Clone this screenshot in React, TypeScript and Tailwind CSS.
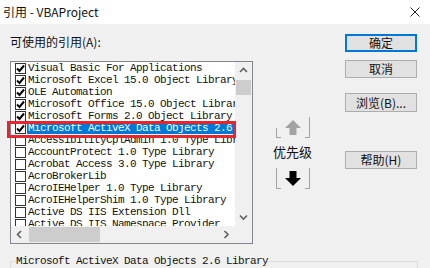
const rows = [
  { text: "Visual Basic For Applications", checked: true },
  { text: "Microsoft Excel 15.0 Object Library", checked: true },
  { text: "OLE Automation", checked: true },
  { text: "Microsoft Office 15.0 Object Library", checked: true },
  { text: "Microsoft Forms 2.0 Object Library", checked: true },
  { text: "Microsoft ActiveX Data Objects 2.6 Library", checked: true, selected: true },
  { text: "AccessibilityCplAdmin 1.0 Type Library" },
  { text: "AccountProtect 1.0 Type Library" },
  { text: "Acrobat Access 3.0 Type Library" },
  { text: "AcroBrokerLib" },
  { text: "AcroIEHelper 1.0 Type Library" },
  { text: "AcroIEHelperShim 1.0 Type Library" },
  { text: "Active DS IIS Extension Dll" },
  { text: "Active DS IIS Namespace Provider" },
];

function Chevron({ dir }: { dir: "up" | "down" | "left" | "right" }) {
  const pts = {
    up: "1,6 4.5,2.5 8,6",
    down: "1,2.5 4.5,6 8,2.5",
    left: "6,1 2.5,4.5 6,8",
    right: "2.5,1 6,4.5 2.5,8",
  }[dir];
  return (
    <svg width="9" height="9" viewBox="0 0 9 9">
      <polyline points={pts} fill="none" stroke="#606060" strokeWidth="1.6" />
    </svg>
  );
}

function Checkbox({ checked }: { checked?: boolean }) {
  return (
    <div className="ml-[4px] flex h-[11px] w-[11px] shrink-0 items-center justify-center border border-[#333] bg-white">
      {checked ? (
        <svg width="9" height="9" viewBox="0 0 9 9">
          <polyline points="1,4.5 3.5,7 8,1.5" fill="none" stroke="#000" strokeWidth="2" />
        </svg>
      ) : null}
    </div>
  );
}

function MoveButton({ down }: { down?: boolean }) {
  const color = down ? "#000" : "#a3a3a3";
  return (
    <svg width="34" height="21" viewBox="0 0 34 21">
      <g stroke="#a0a0a0" strokeWidth="1" fill="none">
        <polyline points={down ? "0.5,0 0.5,20.5 5,20.5" : "0.5,11 0.5,20.5 5,20.5"} />
        <polyline points="33.5,0 33.5,20.5 29,20.5" />
      </g>
      {down ? (
        <polygon points="13.5,3 20.5,3 20.5,10 25,10 17,18 9,10 13.5,10" fill={color} />
      ) : (
        <polygon points="17,3 25,11 20.5,11 20.5,18 13.5,18 13.5,11 9,11" fill={color} />
      )}
    </svg>
  );
}

function WinButton({ label, h = "h-[18px]", def, className = "" }: { label: string; h?: string; def?: boolean; className?: string }) {
  return (
    <div
      className={`${h} ${className} flex w-[72px] items-center justify-center bg-[#e1e1e1] text-[12px] leading-none text-[#111] ${
        def ? "border-2 border-[#0078d7]" : "border border-[#adadad]"
      }`}
    >
      {label}
    </div>
  );
}

export default function App() {
  return (
    <div className="relative h-[268px] w-[430px] overflow-hidden bg-[#f0f0f0] font-['Noto_Sans_CJK_SC',sans-serif] text-[#111]">
      <div className="flex h-[24px] items-center justify-between bg-white pl-[3px] pr-[10px] text-[12px]">
        <span>引用 - VBAProject</span>
        <svg width="10" height="10" viewBox="0 0 10 10">
          <path d="M0.5 0.5 L9.5 9.5 M9.5 0.5 L0.5 9.5" stroke="#222" strokeWidth="1" />
        </svg>
      </div>

      <div className="flex">
        <div className="pl-[10px] pt-[10px]">
          <p className="h-[16px] text-[12px] leading-[16px]">可使用的引用(A):</p>
          <div className="mt-[11px] grid h-[183px] w-[243px] grid-cols-[224px_17px] grid-rows-[164px_17px] border border-[#828790] bg-white">
            <div className="overflow-hidden font-['Liberation_Mono',monospace] text-[11px] leading-[12px] tracking-[-0.6px]">
              {rows.map((r) => (
                <div key={r.text} className="flex h-[12px] items-center">
                  <Checkbox checked={r.checked} />
                  <span
                    className={`ml-[1px] whitespace-nowrap pl-[1px] ${
                      r.selected ? "bg-[#0078d7] text-white" : "text-[#111]"
                    }`}
                  >
                    {r.text}
                  </span>
                </div>
              ))}
            </div>
            <div className="flex flex-col items-center bg-[#f0f0f0]">
              <div className="flex h-[17px] items-center justify-center">
                <Chevron dir="up" />
              </div>
              <div className="mt-[1px] h-[15px] w-[15px] bg-[#cdcdcd]" />
              <div className="flex-1" />
              <div className="flex h-[17px] items-center justify-center">
                <Chevron dir="down" />
              </div>
            </div>
            <div className="flex items-center bg-[#f0f0f0]">
              <div className="flex w-[17px] items-center justify-center">
                <Chevron dir="left" />
              </div>
              <div className="ml-[1px] h-[15px] w-[71px] bg-[#cdcdcd]" />
              <div className="flex-1" />
              <div className="flex w-[17px] items-center justify-center">
                <Chevron dir="right" />
              </div>
            </div>
            <div className="bg-[#f0f0f0]" />
          </div>
        </div>

        <div className="flex w-[92px] flex-col items-start pl-[20px] pt-[93px]">
          <div className="flex flex-col items-center">
            <MoveButton />
            <p className="mt-[6px] h-[16px] text-[13px] leading-[16px]">优先级</p>
            <div className="mt-[8px]">
              <MoveButton down />
            </div>
          </div>
        </div>

        <div className="flex flex-col pt-[10px]">
          <WinButton label="确定" def />
          <WinButton label="取消" className="mt-[8px]" />
          <WinButton label="浏览(B)..." h="h-[19px]" className="mt-[15px]" />
          <WinButton label="帮助(H)" className="mt-[39px]" />
        </div>
      </div>

      <fieldset className="ml-[10px] mt-[11px] h-[40px] w-[408px] border border-[#dcdcdc]">
        <legend className="ml-[5px] font-['Liberation_Mono',monospace] text-[11px] leading-[12px] tracking-[-0.6px]">
          Microsoft ActiveX Data Objects 2.6 Library
        </legend>
      </fieldset>

      <div className="absolute left-[7px] top-[121px] h-[17px] w-[229px] border-[3px] border-[#e5262e]" />
    </div>
  );
}
